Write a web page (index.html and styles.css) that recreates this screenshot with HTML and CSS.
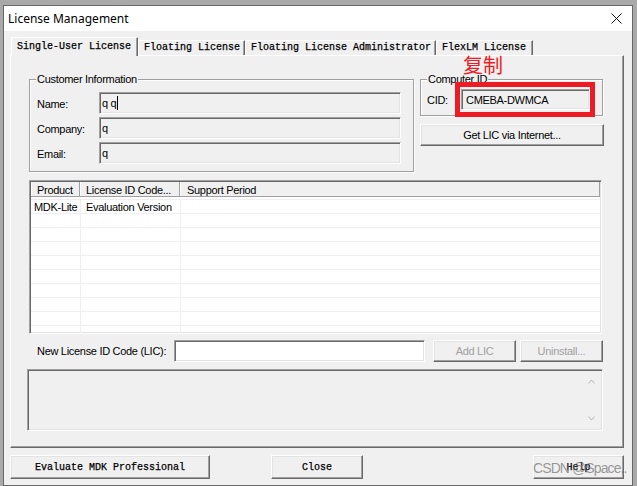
FILE: index.html
```html
<!DOCTYPE html>
<html>
<head>
<meta charset="utf-8">
<title>License Management</title>
<link rel="stylesheet" href="styles.css">
</head>
<body>
<div class="window">
  <div class="titlebar">
    <span class="title">License Management</span>
    <svg class="close" width="11" height="11" viewBox="0 0 11 11"><path d="M0.5 0.5L10.5 10.5M10.5 0.5L0.5 10.5" stroke="#111" stroke-width="1" fill="none"/></svg>
  </div>
  <div class="client">
    <div class="tabs">
      <div class="tab active">Single-User License</div>
      <div class="tab">Floating License</div>
      <div class="tab">Floating License Administrator</div>
      <div class="tab last">FlexLM License</div>
    </div>
    <div class="panel">
      <div class="top">
        <div class="group cust">
          <span class="legend">Customer Information</span>
          <div class="field"><span class="lbl">Name:</span><div class="input ro cust-in">q q<span class="caret"></span></div></div>
          <div class="field"><span class="lbl">Company:</span><div class="input ro cust-in">q</div></div>
          <div class="field"><span class="lbl">Email:</span><div class="input ro cust-in">q</div></div>
        </div>
        <div class="rightcol">
          <div class="group cid">
            <span class="legend">Computer ID</span>
            <div class="field"><span class="lbl cid-lbl">CID:</span><div class="input ro cid-in">CMEBA-DWMCA</div></div>
            <span class="annot-text">复制</span>
            <div class="annot-box"></div>
          </div>
          <div class="btn getlic">Get LIC via Internet...</div>
        </div>
      </div>

      <div class="list">
        <div class="lh">
          <div class="hc h1">Product</div>
          <div class="hc h2">License ID Code...</div>
          <div class="hc h3">Support Period</div>
        </div>
        <div class="rows">
          <div class="row"><div class="c c1">MDK-Lite</div><div class="c c2">Evaluation Version</div><div class="c c3"></div></div>
          <div class="row"><div class="c c1"></div><div class="c c2"></div><div class="c c3"></div></div>
          <div class="row"><div class="c c1"></div><div class="c c2"></div><div class="c c3"></div></div>
          <div class="row"><div class="c c1"></div><div class="c c2"></div><div class="c c3"></div></div>
          <div class="row"><div class="c c1"></div><div class="c c2"></div><div class="c c3"></div></div>
          <div class="row"><div class="c c1"></div><div class="c c2"></div><div class="c c3"></div></div>
          <div class="row"><div class="c c1"></div><div class="c c2"></div><div class="c c3"></div></div>
          <div class="row"><div class="c c1"></div><div class="c c2"></div><div class="c c3"></div></div>
          <div class="row"><div class="c c1"></div><div class="c c2"></div><div class="c c3"></div></div>
          <div class="row"><div class="c c1"></div><div class="c c2"></div><div class="c c3"></div></div>
        </div>
      </div>

      <div class="lic-row">
        <span class="lbl lic-lbl">New License ID Code (LIC):</span>
        <div class="input lic-in"></div>
        <div class="btn small disabled add">Add LIC</div>
        <div class="btn small disabled uninst">Uninstall...</div>
      </div>

      <div class="msg">
        <div class="scroll">
          <svg width="7" height="5" viewBox="0 0 7 5"><polyline points="0.5,4.5 3.5,1 6.5,4.5" fill="none" stroke="#b5b5b5" stroke-width="1"/></svg>
          <svg width="7" height="5" viewBox="0 0 7 5"><polyline points="0.5,0.5 3.5,4 6.5,0.5" fill="none" stroke="#b5b5b5" stroke-width="1"/></svg>
        </div>
      </div>
    </div>

    <div class="buttons">
      <div class="btn mono eval">Evaluate MDK Professional</div>
      <div class="btn mono closebtn">Close</div>
      <div class="btn mono help">Help</div>
    </div>
  </div>
</div>
<div class="watermark">CSDN @Space..</div>
</body>
</html>
```

FILE: styles.css
```css
body {
  margin: 0;
  width: 637px;
  height: 486px;
  background: #a9a9a9;
  overflow: hidden;
  position: relative;
  font: 11px "Liberation Sans", Arial, sans-serif;
  letter-spacing: -0.3px;
  color: #000;
}

.window {
  box-sizing: border-box;
  margin: 5px 0 0 3px;
  width: 630px;
  height: 481px;
  border: 1px solid #686868;
  background: #f0f0f0;
  display: flex;
  flex-direction: column;
}

.titlebar {
  height: 25px;
  background: #fff;
  display: flex;
  align-items: center;
  justify-content: space-between;
  padding: 0 10px 0 4px;
  font: 12px "Noto Sans", "Liberation Sans", sans-serif;
  letter-spacing: 0;
}

.client {
  padding: 6px 0 0 6px;
}

.tabs {
  display: flex;
  align-items: flex-end;
  height: 19px;
  margin: 0 0 -1px 1px;
  position: relative;
  z-index: 1;
}

.tab {
  box-sizing: border-box;
  height: 15px;
  margin-bottom: 1px;
  padding: 0 4px 0 5px;
  border-top: 1px solid #fff;
  border-left: 1px solid #fff;
  border-right: 1px solid #696969;
  box-shadow: inset -1px 0 #a0a0a0;
  background: #f0f0f0;
  white-space: pre;
  font: 10px "Liberation Mono", monospace;
  letter-spacing: 0;
  -webkit-text-stroke: 0.25px #000;
  line-height: 14px;
}

.tab.active {
  height: 19px;
  margin-bottom: 0;
  line-height: 17px;
  padding: 0 6px 0 5px;
}

.tab.last {
  padding-right: 6px;
}

.panel {
  box-sizing: border-box;
  width: 614px;
  height: 393px;
  border: 1px solid;
  border-color: #fff #696969 #696969 #fff;
  box-shadow: inset -1px -1px #a0a0a0;
}

.top {
  display: flex;
  gap: 6px;
  margin: 23px 0 0 18px;
  align-items: flex-start;
}

.group {
  position: relative;
  box-sizing: border-box;
  border: 1px solid #a0a0a0;
  box-shadow: inset 1px 1px #fff, 1px 1px #fff;
}

.legend {
  position: absolute;
  top: -8px;
  left: 6px;
  padding: 0 1px;
  line-height: 14px;
  background: #f0f0f0;
  white-space: nowrap;
}

.cust {
  width: 385px;
  height: 93px;
  padding: 12px 0 0 7px;
  display: flex;
  flex-direction: column;
  gap: 3px;
}

.field {
  display: flex;
  align-items: center;
}

.lbl {
  white-space: nowrap;
}

.cust .lbl {
  width: 62px;
  padding-top: 2px;
}

.input {
  box-sizing: border-box;
  height: 22px;
  border: 1px solid;
  border-color: #a0a0a0 #fff #fff #a0a0a0;
  box-shadow: inset 1px 1px #696969, inset -1px -1px #e3e3e3;
  padding-left: 2px;
  display: flex;
  align-items: center;
  white-space: pre;
}

.ro {
  background: #f0f0f0;
}

.cust-in {
  width: 302px;
}

.caret {
  display: inline-block;
  width: 1px;
  height: 14px;
  background: #000;
  margin-left: 1px;
}

.rightcol {
  display: flex;
  flex-direction: column;
  gap: 8px;
  width: 185px;
}

.cid {
  width: 183px;
  height: 37px;
  padding: 9px 0 0 6px;
}

.cid-lbl {
  width: 34px;
}

.cid-in {
  width: 129px;
  height: 21px;
  padding-left: 4px;
}

.annot-text {
  position: absolute;
  left: 42px;
  top: -27px;
  font: 20px "Noto Sans CJK SC", sans-serif;
  letter-spacing: 0;
  line-height: 24px;
  color: #ed1c24;
}

.annot-box {
  position: absolute;
  left: 34px;
  top: 2px;
  width: 140px;
  height: 35px;
  box-sizing: border-box;
  border: 5px solid #ed1c24;
}

.btn {
  box-sizing: border-box;
  border: 1px solid;
  border-color: #fff #696969 #696969 #fff;
  box-shadow: inset -1px -1px #a0a0a0, inset 1px 1px #e3e3e3;
  background: #f0f0f0;
  display: flex;
  align-items: center;
  justify-content: center;
  white-space: pre;
}

.getlic {
  width: 184px;
  height: 22px;
}

.list {
  margin: 8px 0 0 18px;
  width: 573px;
  height: 154px;
  box-sizing: border-box;
  border: 1px solid;
  border-color: #a0a0a0 #fff #fff #a0a0a0;
  box-shadow: inset 1px 1px #696969, inset -1px -1px #e3e3e3;
  padding: 1px;
  background: #fff;
  overflow: hidden;
}

.lh {
  display: flex;
  height: 15px;
  box-sizing: border-box;
  border-bottom: 1px solid #a0a0a0;
  background: #f0f0f0;
}

.hc {
  box-sizing: border-box;
  border-right: 1px solid #a0a0a0;
  box-shadow: inset 1px 0 #fff;
  padding-left: 5px;
  line-height: 16px;
  white-space: nowrap;
}

.h1 { width: 49px; padding-left: 6px; }
.h2 { width: 100px; padding-left: 6px; }
.h3 { width: 420px; padding-left: 7px; }

.rows {
  padding-top: 2px;
}

.row {
  display: flex;
  height: 14px;
  box-sizing: border-box;
  border-top: 1px solid #efefef;
}

.c {
  box-sizing: border-box;
  line-height: 15px;
  white-space: nowrap;
}

.c1 { width: 50px; border-right: 1px solid #efefef; padding-left: 3px; }
.c2 { width: 100px; border-right: 1px solid #efefef; padding-left: 5px; }
.c3 { flex: 1; }

.lic-row {
  display: flex;
  align-items: center;
  margin: 6px 0 0 26px;
  height: 22px;
}

.lic-lbl {
  width: 137px;
}

.lic-in {
  width: 251px;
  background: #fff;
}

.small {
  width: 83px;
  height: 22px;
}

.add { margin-left: 8px; }
.uninst { margin-left: 4px; }

.disabled {
  color: #a0a0a0;
}

.msg {
  margin: 7px 0 0 16px;
  width: 576px;
  height: 62px;
  box-sizing: border-box;
  border: 1px solid;
  border-color: #a0a0a0 #fff #fff #a0a0a0;
  box-shadow: inset 1px 1px #696969, inset -1px -1px #e3e3e3;
  display: flex;
  justify-content: flex-end;
  padding: 2px;
}

.scroll {
  width: 17px;
  display: flex;
  flex-direction: column;
  justify-content: space-between;
  align-items: center;
  padding: 7px 0;
}

.buttons {
  display: flex;
  margin-top: 7px;
  width: 614px;
}

.mono {
  font: 10px "Liberation Mono", monospace;
  letter-spacing: 0;
  -webkit-text-stroke: 0.25px #000;
  height: 24px;
}

.eval { width: 200px; }
.closebtn { width: 92px; margin-left: 61px; }
.help { width: 91px; margin-left: auto; }

.watermark {
  position: absolute;
  left: 533px;
  top: 459px;
  font: 14px "Liberation Sans", Arial, sans-serif;
  letter-spacing: -0.9px;
  line-height: 18px;
  color: rgba(120, 120, 120, 0.75);
  white-space: nowrap;
}
```
